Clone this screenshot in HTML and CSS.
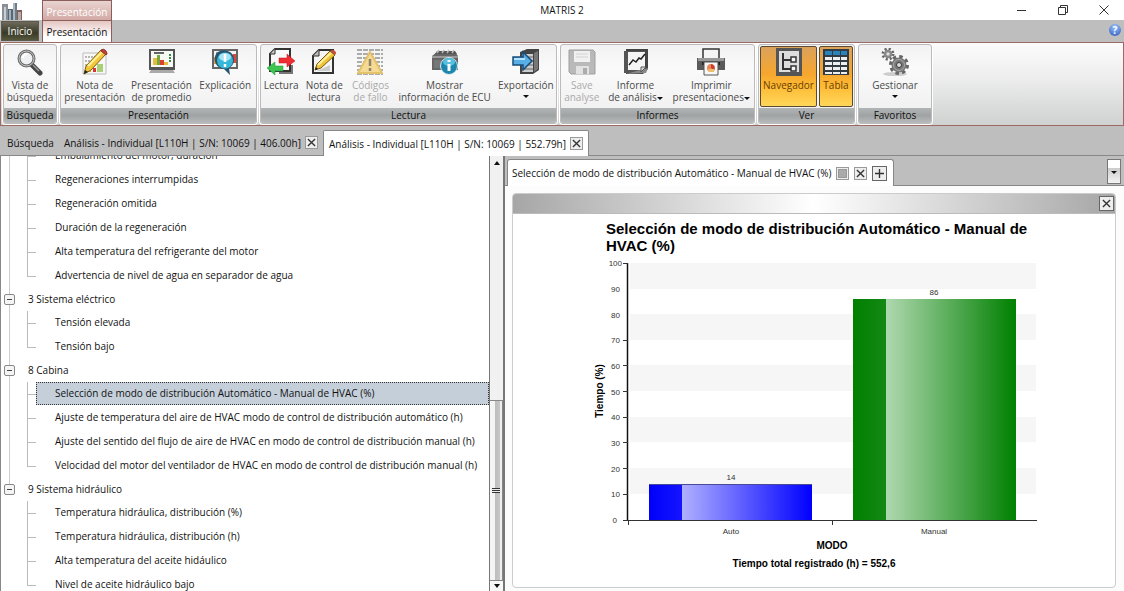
FILE: index.html
```html
<!DOCTYPE html>
<html lang="es">
<head>
<meta charset="utf-8">
<title>MATRIS 2</title>
<link rel="stylesheet" href="styles.css">
</head>
<body>
<div class="app">
  <header class="titlebar">
    <svg class="app-logo" width="24" height="20" viewBox="0 0 24 20"><path d="M2 4h6v16H2z" fill="#8a8f96"/><path d="M4 7h2v13H4z" fill="#c5d0da"/><path d="M8 9h5v11H8z" fill="#5c666f"/><path d="M9 10h2v10H9z" fill="#9fb2c4"/><path d="M13 3h4v17h-4z" fill="#aab6c2"/><path d="M15 3h2v17h-2z" fill="#6d7c8b"/><path d="M17 10h5v10h-5z" fill="#7f5f5b"/><path d="M18 12h3v8h-3z" fill="#b9aaa8"/></svg>
    <span class="context-title">Presentación</span>
    <h1 class="window-title">MATRIS 2</h1>
    <div class="window-buttons">
      <button aria-label="Minimizar"><svg width="12" height="12" viewBox="0 0 12 12"><path d="M1 6.500h9" stroke="#333" fill="none"/></svg></button>
      <button aria-label="Restaurar"><svg width="12" height="12" viewBox="0 0 12 12"><path d="M1.500 3.500h7v7h-7zM3.500 3.500v-2h7v7h-2" stroke="#333" fill="none"/></svg></button>
      <button aria-label="Cerrar"><svg width="12" height="12" viewBox="0 0 12 12"><path d="M1.500 1.500l9 9M10.500 1.500l-9 9" stroke="#333" fill="none"/></svg></button>
    </div>
  </header>

  <nav class="ribbon-tabs">
    <button class="tab-home">Inicio</button>
    <button class="tab-context">Presentación</button>
    <button class="help" aria-label="Ayuda">?</button>
  </nav>

  <section class="ribbon">
    <div class="group g-search">
      <div class="tools">
        <button class="tool"><svg viewBox="0 0 28 28"><path d="M16 17l8 8" stroke="#444" stroke-width="5" stroke-linecap="round"/><path d="M17 17l6 6" stroke="#999" stroke-width="1.500"/><circle cx="10.500" cy="10.500" r="7.500" fill="#eef0f1" stroke="#666" stroke-width="3"/><circle cx="10.500" cy="10.500" r="7.500" fill="none" stroke="#ccc"/><path d="M7 10a4 4 0 0 1 4-4" stroke="#fff" stroke-width="2" fill="none"/></svg><span>Vista de<br>búsqueda</span></button>
      </div>
      <h2>Búsqueda</h2>
    </div>
    <div class="group g-pres">
      <div class="tools">
        <button class="tool w-66"><svg viewBox="0 0 28 28"><path d="M2 5h23v21H2z" fill="#f8f8f8" stroke="#bbb"/><path d="M4 9h14M4 13h9M4 17h6" stroke="#777" stroke-dasharray="2 1"/><path d="M7 18h3v6H7z" fill="#e6b040"/><path d="M12 20h3v4h-3z" fill="#d33"/><path d="M16 16h6v8h-6z" fill="#a9cf77"/><path d="M3 26l2-8L20 2l5 4L10 22z" fill="#f2c83a" stroke="#7e5b12"/><path d="M7 18L21 4" stroke="#fff09a" stroke-width="2"/><path d="M20 2q3-2 5 1t0 4l-5-4z" fill="#c2423c" stroke="#8c2f2a"/><path d="M3 26l1-4 3 2z" fill="#222"/></svg><span>Nota de<br>presentación</span></button>
        <button class="tool w-66"><svg viewBox="0 0 28 28"><path d="M1 1h26v21H1z" fill="#555"/><path d="M3 3h22v16H3z" fill="#f7f9f5"/><path d="M6 5h10" stroke="#333" stroke-width="1.500"/><path d="M5 10h4v7H5z" fill="#e6bc3e"/><path d="M9 7h3v10H9z" fill="#73a83e"/><path d="M12 12h4v5h-4z" fill="#d9402e"/><path d="M16 14h4v3h-4z" fill="#e6bc3e"/><path d="M22 6v9" stroke="#348a48" stroke-width="2" stroke-dasharray="2 1"/><path d="M3 22h22l2 3H1z" fill="#aaa"/></svg><span>Presentación<br>de promedio</span></button>
        <button class="tool w-60"><svg viewBox="0 0 28 28"><path d="M1 1h26v20H1z" fill="#666"/><path d="M3 3h22v16H3z" fill="#f4f4f4"/><path d="M5 5h8" stroke="#444"/><path d="M3 9h3v7H3z" fill="#e49c3e"/><path d="M22 6h3v9h-3z" fill="#d9483c"/><path d="M5 6a10 9 0 0 1 18 6a10 10 0 0 1-5 8l1 7-6-6A10 10 0 0 1 5 6z" fill="#27556e"/><circle cx="14" cy="12.500" r="8" fill="#36b6d9"/><ellipse cx="14" cy="9" rx="6" ry="4" fill="#a5e4f3"/><path d="M14 6v8M14 16v3" stroke="#fff" stroke-width="2.500"/></svg><span>Explicación</span></button>
      </div>
      <h2>Presentación</h2>
    </div>
    <div class="group g-read">
      <div class="tools">
        <button class="tool w-40"><svg viewBox="0 0 28 28"><path d="M8 1h15v22H3V6z" fill="#f8f8f8" stroke="#333" stroke-width="2"/><path d="M8 1v5H3" fill="#ccc" stroke="#333"/><path d="M25 17v8H12" stroke="#777" stroke-width="2" fill="none"/><path d="M12 10h8V6l8 7-8 6v-4h-8z" fill="#ed2d32" stroke="#c8161c" stroke-width=".5"/><path d="M16 18v5H8v4l-8-7 8-6v4z" fill="#3fc451" stroke="#258f35" stroke-width=".5"/></svg><span>Lectura</span></button>
        <button class="tool w-46"><svg viewBox="0 0 28 28"><path d="M9 2h14v23H3V8z" fill="#f5f5f5" stroke="#333" stroke-width="2"/><path d="M9 2v6H3" fill="#bbb" stroke="#333"/><path d="M7 23l13-6v6z" fill="#ccc"/><path d="M5 22l2-6L20 3l5 4L11 20z" fill="#f0c537" stroke="#765a17"/><path d="M8 17L21 5" stroke="#fff0a0" stroke-width="2"/><path d="M20 3q3-2 5 0t0 4z" fill="#c64c3c"/><path d="M5 22l1-3 2 2z" fill="#222"/></svg><span>Nota de<br>lectura</span></button>
        <button class="tool w-46 off" disabled><svg viewBox="0 0 28 28"><path d="M1 2h26M1 6h26M1 10h26M1 14h26M1 18h26M1 22h26M1 26h26" stroke="#999" stroke-width="2" stroke-dasharray="5 1"/><path d="M14 4l12 21H2z" fill="#f4d27b" stroke="#dfb54a" stroke-linejoin="round" stroke-width="2"/><path d="M14 11v7M14 20v3" stroke="#77684a" stroke-width="2.500"/></svg><span>Códigos<br>de fallo</span></button>
        <button class="tool w-102"><svg viewBox="0 0 28 28"><path d="M1 8l5-4h18l3 4v14H1z" fill="#666"/><path d="M1 8h26v2H1z" fill="#999"/><path d="M4 6l2-3h18l2 3z" fill="#555"/><path d="M6 5l2-3M11 5l2-3M16 5l2-3M21 5l2-3" stroke="#bbb" stroke-width="1.500"/><path d="M3 12h22v8H3z" fill="#777"/><circle cx="18" cy="18" r="8.500" fill="#1d86ae" stroke="#dce9ef"/><ellipse cx="18" cy="14" rx="6" ry="4" fill="#58bfdc"/><path d="M18 16v7M18 12v2" stroke="#fff" stroke-width="3"/></svg><span>Mostrar<br>información de ECU</span></button>
        <button class="tool w-60"><svg viewBox="0 0 28 28"><path d="M8 4l7-3h12v21l-6 4H8z" fill="#444"/><path d="M10 6h11v18H10z" fill="#ccc"/><path d="M10 9h11M10 13h11M10 17h11M10 21h11" stroke="#666"/><path d="M22 5l4-2v18l-4 3z" fill="#777"/><path d="M1 9h10V4l9 9-9 9v-5H1z" fill="#58aee7" stroke="#174c78" stroke-width="1.500"/><path d="M2 11h11" stroke="#b5e1ff" stroke-width="2"/></svg><span>Exportación</span><i class="caret"></i></button>
      </div>
      <h2>Lectura</h2>
    </div>
    <div class="group g-report">
      <div class="tools">
        <button class="tool w-40 off" disabled><svg viewBox="0 0 28 28"><path d="M1 2h24l2 2v22H3l-2-2z" fill="#aaa" stroke="#8b8b8b"/><path d="M6 3h16v11H6z" fill="#f0f0f0"/><path d="M8 6h12M8 9h12" stroke="#ccc"/><path d="M8 18h13v8H8z" fill="#ddd"/><path d="M15 20h4v6h-4z" fill="#999"/></svg><span>Save<br>analyse</span></button>
        <button class="tool w-66"><svg viewBox="0 0 28 28"><path d="M4 1h22v20l-5 5H4z" fill="#444"/><path d="M2 3h21v22H2z" fill="#555"/><path d="M6 4h17v15l-4 3H6z" fill="#f4f4f4"/><path d="M7 17l4-5 3 2 3-4 2 1 4-5" stroke="#222" stroke-width="1.500" fill="none"/><path d="M4 26l20-1 2-5-8 2z" fill="#888"/><path d="M19 19h5l-5 5z" fill="#ddd" stroke="#555"/></svg><span>Informe<br>de análisis<i class="caret"></i></span></button>
        <button class="tool w-84"><svg viewBox="0 0 28 28"><path d="M6 1h16v11H6z" fill="#f5f5f5" stroke="#333" stroke-width="1.500"/><path d="M0 10h28v12H0z" fill="#5b5b5b"/><path d="M1 10h26v3H1z" fill="#999"/><path d="M5 14h18v3H5z" fill="#222"/><path d="M7 14h14v13H7z" fill="#f7f7f7" stroke="#555"/><circle cx="14" cy="20" r="4" fill="#e98958"/><path d="M14 16a4 4 0 0 1 3 6l-3-2z" fill="#c83d37"/><path d="M11 21h6v3h-5z" fill="#f0bd69"/></svg><span>Imprimir<br>presentaciones<i class="caret"></i></span></button>
      </div>
      <h2>Informes</h2>
    </div>
    <div class="group g-view">
      <div class="tools">
        <button class="tool on nav" aria-pressed="true"><svg viewBox="0 0 28 28"><path d="M1 0h26v28H1z" fill="#555"/><path d="M4 3h20v21H4z" fill="#ddd"/><path d="M8 5v16h8M8 12h8" stroke="#333" stroke-width="2" fill="none"/><path d="M16 9h5v5h-5zM16 18h5v5h-5z" fill="#f6f6f6" stroke="#333" stroke-width="1.500"/></svg><span>Navegador</span></button>
        <button class="tool on" aria-pressed="true"><svg viewBox="0 0 28 28"><path d="M1 1h26v26H1z" fill="#303b43"/><path d="M3 3h7v4H3zm8 0h7v4h-7zm8 0h6v4h-6z" fill="#2a83ba"/><path d="M3 9h7v3H3zm8 0h7v3h-7zm8 0h6v3h-6zM3 14h7v3H3zm8 0h7v3h-7zm8 0h6v3h-6zM3 19h7v3H3zm8 0h7v3h-7zm8 0h6v3h-6zM3 24h7v2H3zm8 0h7v2h-7zm8 0h6v2h-6z" fill="#eee"/></svg><span>Tabla</span></button>
      </div>
      <h2>Ver</h2>
    </div>
    <div class="group g-fav">
      <div class="tools">
        <button class="tool"><svg viewBox="0 0 28 28"><ellipse cx="14" cy="26" rx="12" ry="2" fill="#ccc"/><g fill="none" stroke="#666"><circle cx="7" cy="6" r="5" stroke-width="3" stroke-dasharray="2 1.930"/><circle cx="18" cy="17" r="8" stroke-width="4" stroke-dasharray="3.300 2.980"/></g><circle cx="7" cy="6" r="3" fill="#ddd" stroke="#888" stroke-width="2.500"/><circle cx="18" cy="17" r="5" fill="#eee" stroke="#777" stroke-width="5"/><circle cx="18" cy="17" r="5.500" fill="none" stroke="#aaa"/><circle cx="18" cy="17" r="2.500" fill="#ddd" stroke="#333"/></svg><span>Gestionar</span><i class="caret"></i></button>
      </div>
      <h2>Favoritos</h2>
    </div>
  </section>

  <nav class="doc-tabs">
    <div class="doc-tab"><button class="doc-name">Búsqueda</button></div>
    <div class="doc-tab"><button class="doc-name">Análisis - Individual [L110H | S/N: 10069 | 406.00h]</button><button class="box-btn" aria-label="Cerrar"><svg viewBox="0 0 10 10"><path d="M1 1l8 8M9 1l-8 8"/></svg></button></div>
    <div class="doc-tab active"><button class="doc-name">Análisis - Individual [L110H | S/N: 10069 | 552.79h]</button><button class="box-btn" aria-label="Cerrar"><svg viewBox="0 0 10 10"><path d="M1 1l8 8M9 1l-8 8"/></svg></button></div>
  </nav>

  <main class="work">
    <aside class="side">
      <ul class="tree">
        <li class="node"><ul>
          <li>Embalamiento del motor, duración</li>
          <li>Regeneraciones interrumpidas</li>
          <li>Regeneración omitida</li>
          <li>Duración de la regeneración</li>
          <li>Alta temperatura del refrigerante del motor</li>
          <li>Advertencia de nivel de agua en separador de agua</li>
        </ul></li>
        <li class="node"><div class="branch"><button class="fold" aria-label="Contraer"></button>3 Sistema eléctrico</div><ul>
          <li>Tensión elevada</li>
          <li>Tensión bajo</li>
        </ul></li>
        <li class="node"><div class="branch"><button class="fold" aria-label="Contraer"></button>8 Cabina</div><ul>
          <li class="selected"><span>Selección de modo de distribución Automático - Manual de HVAC (%)</span></li>
          <li>Ajuste de temperatura del aire de HVAC modo de control de distribución automático (h)</li>
          <li>Ajuste del sentido del flujo de aire de HVAC en modo de control de distribución manual (h)</li>
          <li>Velocidad del motor del ventilador de HVAC en modo de control de distribución manual (h)</li>
        </ul></li>
        <li class="node last"><div class="branch"><button class="fold" aria-label="Contraer"></button>9 Sistema hidráulico</div><ul>
          <li>Temperatura hidráulica, distribución (%)</li>
          <li>Temperatura hidráulica, distribución (h)</li>
          <li>Alta temperatura del aceite hidáulico</li>
          <li>Nivel de aceite hidráulico bajo</li>
        </ul></li>
      </ul>
      <div class="scroll">
        <i class="arrow up"></i>
        <div class="track"></div>
        <div class="thumb"><i class="grip"></i></div>
        <div class="down-btn"><i class="arrow down"></i></div>
      </div>
    </aside>

    <section class="view">
      <div class="view-tabs">
        <div class="view-tab">
          <button class="doc-name">Selección de modo de distribución Automático - Manual de HVAC (%)</button>
          <button class="box-btn" aria-label="Mosaico"><i class="tile"></i></button>
          <button class="box-btn" aria-label="Cerrar"><svg viewBox="0 0 10 10"><path d="M1 1l8 8M9 1l-8 8"/></svg></button>
          <button class="box-btn strong" aria-label="Añadir"><svg viewBox="0 0 10 10"><path d="M5 0v10M0 5h10"/></svg></button>
        </div>
        <button class="more" aria-label="Más pestañas"><i class="caret"></i></button>
      </div>
      <div class="canvas">
        <article class="panel">
          <div class="panel-bar"><button class="box-btn strong" aria-label="Cerrar panel"><svg viewBox="0 0 10 10"><path d="M1 1l8 8M9 1l-8 8"/></svg></button></div>
          <figure class="chart">
            <figcaption>Selección de modo de distribución Automático - Manual de HVAC (%)</figcaption>
            <svg class="plot" width="452" height="316" viewBox="0 0 452 316">
              <defs>
                <linearGradient id="blue"><stop offset="0" stop-color="#0000fa"/><stop offset=".2" stop-color="#1414ff"/><stop offset=".2" stop-color="#b0b0ff"/><stop offset="1" stop-color="#0000ff"/></linearGradient>
                <linearGradient id="green"><stop offset="0" stop-color="#008000"/><stop offset=".2" stop-color="#148814"/><stop offset=".2" stop-color="#b0d8b0"/><stop offset="1" stop-color="#008000"/></linearGradient>
              </defs>
              <g transform="translate(2 0)">
              <path d="M40 9h406v26H40zM40 60h406v26H40zM40 111h406v26H40zM40 163h406v25H40zM40 214h406v26H40z" fill="#f6f6f6"/>
              <rect x="59" y="230" width="163" height="36" fill="url(#blue)"/>
              <rect x="263" y="45" width="163" height="221" fill="url(#green)"/>
              <path d="M59 230.500h163" stroke="#4a4a9a"/>
              <path d="M37.500 9v257" stroke="#111" stroke-width="1.500" fill="none"/>
              <path d="M33 266.500h414M38.500 266v5M242.500 266v5M33 9.500h5M33 86.500h5M33 111.500h5M33 137.500h5M33 163.500h5M33 188.500h5M33 214.500h5M33 240.500h5" stroke="#333" fill="none"/>
              <g class="ticks"><text x="32" y="12">100</text><text x="30" y="38">90</text><text x="30" y="64">80</text><text x="30" y="89">70</text><text x="30" y="115">60</text><text x="30" y="141">50</text><text x="30" y="166">40</text><text x="30" y="192">30</text><text x="30" y="218">20</text><text x="30" y="243">10</text><text x="27" y="269">0</text></g>
              <g class="values"><text x="141" y="226">14</text><text x="344" y="41">86</text><text x="141" y="280">Auto</text><text x="344" y="280">Manual</text></g>
              <g class="axis"><text x="242" y="295">MODO</text><text x="224" y="313">Tiempo total registrado (h) = 552,6</text><text transform="translate(13 137) rotate(-90)">Tiempo (%)</text></g>
              </g>
            </svg>
          </figure>
        </article>
      </div>
    </section>
  </main>
</div>
</body>
</html>
```

FILE: styles.css
```css
* { box-sizing: border-box; }
body { margin: 0; font: 10px/12px "Open Sans", "Noto Sans", sans-serif; color: #111; background: #fff; }
button { font: inherit; color: inherit; padding: 0; margin: 0; border: 0; background: none; white-space: nowrap; }
h1, h2, ul, figure { margin: 0; padding: 0; font-weight: normal; font-size: inherit; }
ul { list-style: none; }
.app { height: 100vh; display: flex; flex-direction: column; overflow: hidden; }

.titlebar { flex: none; height: 20px; display: grid; grid-template-columns: 42px 70px 1fr 108px; align-items: end; }
.app-logo { display: block; }
.context-title { height: 20px; padding-top: 4px; text-align: center; color: #fff; background: linear-gradient(#e8d4d1, #d3aaa6); border: 1px solid #8d5f5a; border-bottom: 0; line-height: 14px; }
.window-title { align-self: center; text-align: center; color: #111; padding-right: 4px; }
.window-buttons { align-self: center; display: flex; gap: 29px; }
.window-buttons svg { display: block; }

.ribbon-tabs { flex: none; height: 22px; display: flex; background: #bebebe; }
.tab-home { width: 38px; margin: 1px 4px 1px 1px; color: #fff; background: linear-gradient(#6d6a5b, #383a26 60%, #55583d); border: 1px solid #5b5a4c; }
.tab-context { width: 70px; margin-left: -1px; color: #111; background: linear-gradient(#e4c5c2, #fff 70%); border: 1px solid #8d5f5a; border-bottom: 0; }
.help { margin: 4px 3px 0 auto; width: 12px; height: 12px; border-radius: 50%; background: radial-gradient(circle at 50% 25%, #9dc4ff, #2a57b8); color: #fff; font-weight: bold; line-height: 12px; }

.ribbon { flex: none; height: 84px; display: flex; gap: 3px; padding: 1px 2px; background: linear-gradient(#fcfcfc, #eee 40%, #cfd2d1); border: 1px solid #9a6a63; }
.group { display: flex; flex-direction: column; border: 1px solid #bbb; border-radius: 3px; background: linear-gradient(#f2f2f2, #fafafa 30%, #efeeef); overflow: hidden; box-shadow: 0 0 0 1px #fff; }
.group h2 { height: 15px; line-height: 15px; text-align: center; color: #111; background: linear-gradient(#b2b5b5, #a0a3a3 50%, #b8bbbb); }
.tools { flex: 1; display: flex; justify-content: space-evenly; }
.g-search { width: 54px; }
.g-pres { width: 197px; }
.g-read { width: 297px; }
.g-report { width: 195px; }
.g-view { width: 97px; }
.g-fav { width: 74px; }
.tool { display: flex; flex-direction: column; align-items: center; padding-top: 3px; color: #4a4a4a; }
.tool svg { width: 28px; height: 28px; margin-bottom: 3px; flex: none; }
.w-40 { width: 40px; }
.w-46 { width: 46px; }
.w-60 { width: 60px; }
.w-66 { width: 66px; }
.w-84 { width: 84px; }
.w-102 { width: 102px; }
.off { color: #aaa; }
.off svg { opacity: .8; }
.tool.on { width: 34px; height: 61px; padding-top: 1px; color: #6b3c00; border: 1px solid #5a4a30; border-radius: 2px; background: linear-gradient(#dba25c, #f6a62e 45%, #fdb934 65%, #ffd75a); }
.tool.nav { width: 57px; }
.g-view .tools { gap: 2px; justify-content: center; padding-top: 1px; }
.caret { display: inline-block; border: 3px solid transparent; border-top-color: #111; border-bottom: 0; vertical-align: middle; }
.tool > .caret { margin-top: 4px; }

.doc-tabs { flex: none; height: 30px; padding-top: 4px; display: flex; background: #bebebe; border-bottom: 1px solid #888; }
.doc-tab { display: flex; align-items: center; gap: 4px; padding: 0 5px; }
.doc-tab:first-child { padding-left: 7px; }
.doc-tab.active { margin-bottom: -1px; background: #fff; border: 1px solid #888; border-bottom: 0; border-radius: 2px 2px 0 0; }
.box-btn { width: 13px; height: 13px; padding: 1px; display: grid; place-items: center; border: 1px solid #999; background: #eee; }
.box-btn svg { width: 9px; height: 9px; fill: none; stroke: #333; stroke-width: 1.5; }
.box-btn.strong { border: 1px solid #666; width: 15px; height: 15px; }
.tile { width: 9px; height: 9px; background: #aaa; border: 1px solid #999; }

.work { flex: 1; min-height: 0; display: grid; grid-template-columns: 503fr 621fr; }
.side { min-height: 0; min-width: 0; display: flex; border-left: 1px solid #888; overflow: hidden; }
.tree { flex: 1; min-width: 0; margin-top: -12px; white-space: nowrap; }
.node { position: relative; }
.node::before { content: ""; position: absolute; left: 8px; top: 0; bottom: 0; border-left: 1px solid #ccc; }
.node.last::before { bottom: auto; height: 12px; }
.branch { height: 23px; line-height: 23px; display: flex; align-items: center; gap: 13px; padding-left: 3px; }
.fold { position: relative; width: 11px; height: 11px; border: 1px solid #888; border-radius: 2px; background: #f5f5f5; }
.fold::after { content: ""; position: absolute; left: 2px; right: 2px; top: 4px; border-top: 1px solid #444; }
.node li { position: relative; height: 24px; line-height: 23px; padding-left: 54px; }
.node li::before { content: ""; position: absolute; left: 26px; top: 0; bottom: 0; border-left: 1px solid #bbb; }
.node li:last-child::before { bottom: 12px; }
.node li::after { content: ""; position: absolute; left: 26px; top: 12px; width: 9px; border-top: 1px solid #bbb; }
.node li.selected { padding-left: 35px; }
.selected span { display: block; line-height: 21px; padding-left: 18px; background: #c5cfda; border: 1px dotted #333; }
.scroll { width: 14px; flex: none; display: flex; flex-direction: column; align-items: stretch; background: #f1f1f1; border-left: 1px solid #777; }
.arrow { align-self: center; border: 3px solid transparent; }
.up { margin-top: 5px; border-bottom: 4px solid #111; border-top: 0; }
.down { border-top: 4px solid #111; border-bottom: 0; }
.track { flex: 236; }
.thumb { flex: 180; display: grid; place-items: center; border: 1px solid #888; border-left: 0; background: linear-gradient(90deg, #f4f4f4 45%, #bdbdbd 45%, #c8c8c8 85%, #eee 85%); }
.grip { width: 8px; height: 5px; border: solid #333; border-width: 1px 0; background: linear-gradient(#eee 1px, #333 1px, #333 2px, #eee 2px); }
.down-btn { height: 10px; display: grid; place-items: center; background: #f8f8f8; }

.view { min-width: 0; min-height: 0; display: flex; flex-direction: column; border-left: 2px solid #777; background: #bebebe; }
.view-tabs { flex: none; height: 30px; padding: 3px 3px 0 2px; display: flex; justify-content: space-between; border-bottom: 1px solid #888; }
.view-tab { display: flex; align-items: center; gap: 5px; padding: 0 6px 0 4px; margin-bottom: -1px; background: #fff; border: 1px solid #888; border-bottom: 0; border-radius: 3px 3px 0 0; }
.more { width: 14px; height: 25px; border: 1px solid #777; background: linear-gradient(#fff 35%, #ccc 36%, #f3f3f3); }
.canvas { flex: 1; min-height: 0; padding: 7px 8px 3px 7px; background: #fcfcfc; display: flex; }
.panel { flex: 1; display: flex; flex-direction: column; background: #fff; border: 1px solid #ccc; border-radius: 4px; overflow: hidden; }
.panel-bar { flex: none; height: 20px; padding: 2px 1px; display: flex; justify-content: flex-end; background: linear-gradient(90deg, #a6a6a6, #fff 50%, #a6a6a6); border-bottom: 1px solid #bbb; }
.chart { width: 452px; margin: 6px auto 0; font-family: "Liberation Sans", Arial, sans-serif; color: #000; }
.chart figcaption { width: 430px; margin-left: 18px; font-size: 15px; line-height: 17px; font-weight: bold; }
.plot { display: block; }
.ticks, .values { font-size: 8px; fill: #333; }
.ticks { text-anchor: end; }
.values, .axis { text-anchor: middle; }
.axis { font-size: 10px; font-weight: bold; }
```
